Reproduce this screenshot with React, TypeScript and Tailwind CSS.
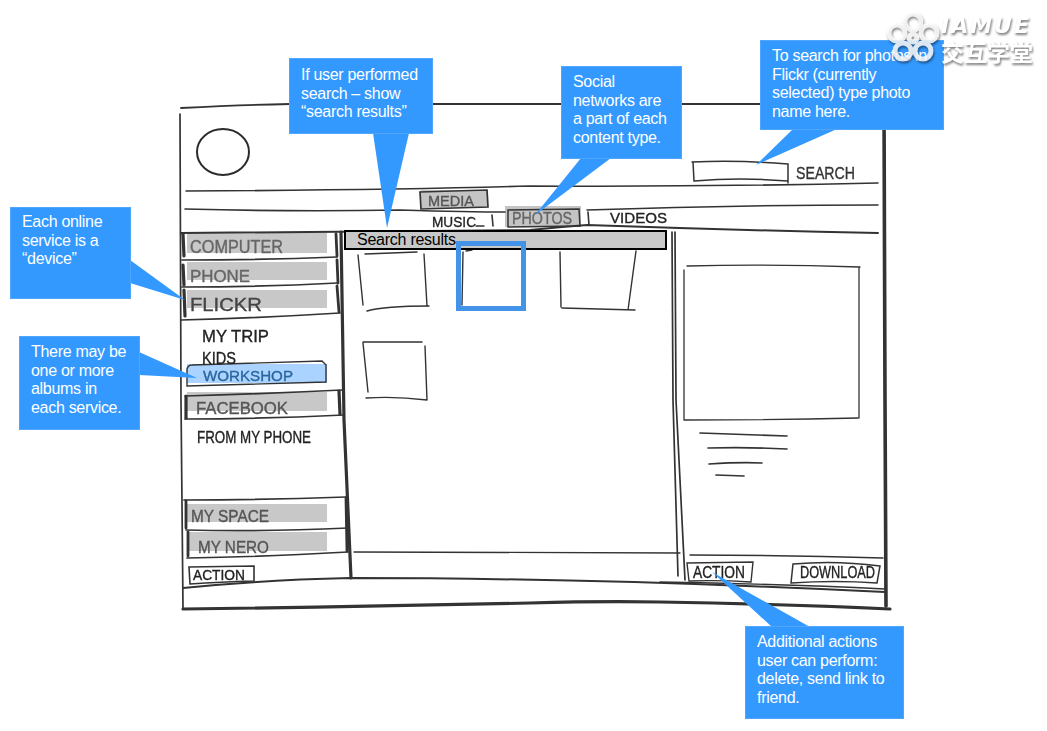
import React from "react";

const strokes: [string, number][] = [
  // outer frame
  ["M181 108 Q240 105 290 104 M433 104 L561 104 M682 104 L760 104", 1.8],
  ["M180 114 L181 400 L183 608", 1.7],
  ["M884 100 L885 400 L886 606", 3.6],
  ["M183 609 Q350 607 530 603 Q600 601 660 602 Q780 604 890 609", 3.2],
  ["M183 588 Q260 580 350 578 Q600 578 885 592", 2],
  ["M660 582 Q780 584 885 589", 1.4],
  // header and nav lines
  ["M186 191 Q400 190 530 186 Q700 187 878 183", 1.6],
  ["M185 209 Q300 212 400 210 Q470 212 505 212 M587 210 Q730 205 878 205", 1.6],
  ["M181 233 Q350 232 530 230 Q560 227 587 225 Q730 230 878 233", 2],
  // sidebar
  ["M341 232 L344 420 L351 578", 3.2],
  ["M183 234 L184 256 M183 265 L184 285 M184 290 L185 316", 3.2],
  ["M336 234 L337 256 M337 260 L338 283 M337 286 L339 312", 2.8],
  ["M182 260 Q260 260 337 257", 1.7],
  ["M182 287 Q260 287 337 283", 1.7],
  ["M181 320 Q260 318 340 313", 1.7],
  ["M185 396 Q260 394 342 390", 1.7],
  ["M185 419 Q260 419 344 415", 1.7],
  ["M186 396 L186 418 M339 391 L340 414", 3.2],
  ["M184 500 Q260 500 346 497", 1.7],
  ["M186 530 Q260 532 348 528", 1.7],
  ["M187 558 Q260 557 348 552", 1.7],
  ["M186 501 L186 528 M188 532 L188 556 M346 498 L347 551", 2.8],
  ["M187 369 Q188 365 192 365 L322 361 L326 365 L326 382 Q260 384 187 386 Z", 1.4],
  ["M189 567 L254 566 L254 581 Q220 582 190 584 Z", 1.6],
  // content area
  ["M354 552 Q520 553 680 553", 1.3],
  ["M690 555 Q790 555 883 558", 1.5],
  ["M672 232 L673 400 L678 576", 1.7],
  ["M675 232 L676 400 L685 580", 1.7],
  // thumbnails
  ["M365 254 L417 252 M358 255 L363 305 M424 254 L427 306 M367 311 Q385 306 429 306", 1.4],
  ["M463 252 L462 305 M466 251 L472 250", 1.4],
  ["M560 252 L561 307 M636 251 L628 310 M562 308 L635 310", 1.4],
  ["M363 342 L422 342 M363 343 L368 392 M425 346 L427 400 M366 398 Q395 396 427 400", 1.4],
  // preview panel
  ["M687 266 Q770 264 860 267 M684 270 L684 420 M859 267 L859 418 M684 420 Q770 420 858 418", 1.3],
  ["M700 433 L787 436", 1.7],
  ["M708 448 Q750 447 787 449", 1.7],
  ["M709 464 Q740 462 762 463", 1.7],
  ["M716 475 L744 476", 1.7],
  // search field
  ["M692 162 Q740 160 788 164 L788 183 M693 162 L694 181 Q740 177 788 181", 1.5],
  // nav separators
  ["M492 215 L493 226 M588 212 L589 225", 1.6],
  ["M476 226 L484 226", 1.3],
  // action buttons
  ["M687 563 L753 562 L751 582 Q720 580 689 581 Z", 1.4],
  ["M793 564 Q835 560 880 566 L877 583 Q835 580 791 583 Z", 1.5],
];

const labels: [string, number, number, number, number, string][] = [
  ["MEDIA", 428, 206, 46, 15, "#555"],
  ["MUSIC", 432, 227, 44, 15, "#222"],
  ["PHOTOS", 512, 224, 60, 16, "#666"],
  ["VIDEOS", 610, 223, 57, 15, "#222"],
  ["SEARCH", 796, 179, 59, 17, "#333"],
  ["COMPUTER", 190, 253, 93, 18, "#666"],
  ["PHONE", 190, 282, 60, 16, "#666"],
  ["FLICKR", 190, 311, 72, 19, "#444"],
  ["MY TRIP", 202, 342, 67, 17, "#222"],
  ["KIDS", 202, 364, 34, 16, "#222"],
  ["WORKSHOP", 203, 381, 90, 15, "#2a659f"],
  ["FACEBOOK", 196, 414, 92, 16, "#555"],
  ["FROM MY PHONE", 197, 443, 114, 16, "#222"],
  ["MY SPACE", 191, 522, 78, 16, "#555"],
  ["MY NERO", 198, 553, 71, 17, "#555"],
  ["ACTION", 193, 580, 52, 14, "#222"],
  ["ACTION", 693, 578, 52, 16, "#222"],
  ["DOWNLOAD", 800, 578, 75, 16, "#222"],
];

const greyBlocks: [number, number, number, number][] = [
  [187, 233, 140, 20],
  [187, 262, 140, 18],
  [187, 290, 140, 18],
  [187, 392, 140, 19],
  [187, 504, 140, 18],
  [187, 532, 140, 19],
];

const Sketch = () => (
  <svg
    className="absolute inset-0 blur-[0.3px] font-['Liberation_Sans',sans-serif]"
    width={1047}
    height={731}
    viewBox="0 0 1047 731"
  >
    {greyBlocks.map(([x, y, w, h]) => (
      <rect key={`${x}-${y}`} x={x} y={y} width={w} height={h} fill="#c8c8c8" />
    ))}
    <rect x={187} y={364} width={140} height={19} fill="#aad4ff" />
    <rect x={420} y={190} width={68} height={18} rx={2} fill="#c4c4c4" />
    <rect x={505} y={206} width={76} height={21} fill="#c4c4c4" />
    <ellipse cx={223} cy={152} rx={26} ry={23} fill="none" stroke="#2b2b2b" strokeWidth={2} />
    <path d="M420 192 L487 190 L488 207 L421 209 Z" fill="none" stroke="#333" strokeWidth={1.7} />
    <path d="M508 210 L579 209 L580 226 L508 227 Z" fill="none" stroke="#333" strokeWidth={1.5} />
    {strokes.map(([d, w], i) => (
      <path key={i} d={d} fill="none" stroke="#333" strokeWidth={w} strokeLinecap="round" />
    ))}
    {labels.map(([text, x, y, len, size, color]) => (
      <text
        key={`${text}-${x}`}
        x={x}
        y={y}
        fontSize={size}
        fill={color}
        stroke={color}
        strokeWidth={0.35}
        textLength={len}
        lengthAdjust="spacingAndGlyphs"
      >
        {text}
      </text>
    ))}
  </svg>
);

const Tails = () => (
  <svg className="absolute inset-0" width={1047} height={731} viewBox="0 0 1047 731">
    <g fill="#3399ff">
      <polygon points="373,133 409,133 387,228" />
      <polygon points="581,158 611,158 535,215" />
      <polygon points="793,129 837,129 756,165" />
      <polygon points="130,260 130,283 185,300" />
      <polygon points="139,352 139,375 197,378" />
      <polygon points="772,627 810,627 712,572" />
    </g>
  </svg>
);

const Callout = ({ className, lines }: { className: string; lines: string[] }) => (
  <div
    className={`absolute bg-[#3399ff] border border-[#4fa6fc] pl-[11px] text-white text-[16px] leading-[18.67px] tracking-[-0.3px] font-['Liberation_Sans',sans-serif] ${className}`}
  >
    {lines.map((line) => (
      <div key={line} className="whitespace-nowrap">
        {line}
      </div>
    ))}
  </div>
);

const Logo = () => (
  <div className="absolute left-[886px] top-[11px] flex [filter:drop-shadow(1px_2px_1px_rgba(0,0,0,0.5))]">
    <svg width={55} height={56} viewBox="0 0 55 56" className="opacity-85">
      <g fill="none" stroke="#fff" strokeWidth={5}>
        <circle cx={27} cy={11} r={8} />
        <circle cx={11} cy={22} r={8} />
        <circle cx={43} cy={22} r={8} />
        <circle cx={17} cy={40} r={8} />
        <circle cx={37} cy={40} r={8} />
        <circle cx={27} cy={27} r={4} />
      </g>
    </svg>
    <div className="flex flex-col gap-[2px] text-white font-bold">
      <span className="pt-[4px] text-[22px] leading-[22px] italic tracking-[2px] font-['DejaVu_Sans',sans-serif]">
        IAMUE
      </span>
      <span className="text-[23px] leading-[24px] font-['Noto_Sans_CJK_SC',sans-serif]">交互学堂</span>
    </div>
  </div>
);

export default function App() {
  return (
    <div className="relative w-[1047px] h-[731px] bg-white overflow-hidden">
      <Sketch />

      {/* search results bar and the selected thumbnail */}
      <div className="absolute left-[344px] top-[230px] w-[323px] h-[20px] bg-[#c8c8c8] border-2 border-black pl-[11px] text-[16px] leading-[16px] tracking-[-0.25px] text-black font-['Liberation_Sans',sans-serif]">
        Search results
      </div>
      <div className="absolute left-[456px] top-[241px] w-[70px] h-[70px] border-[5px] border-[#4394e8]" />

      <Tails />
      <Callout
        className="left-[289px] top-[58px] w-[144px] h-[76px] pt-[7px] pl-[10px]"
        lines={["If user performed", "search – show", "“search results”"]}
      />
      <Callout
        className="left-[561px] top-[66px] w-[121px] h-[93px] pt-[6px]"
        lines={["Social", "networks are", "a part of each", "content type."]}
      />
      <Callout
        className="left-[760px] top-[40px] w-[184px] h-[90px] pt-[6px]"
        lines={["To search for photos in", "Flickr (currently", "selected) type photo", "name here."]}
      />
      <Callout
        className="left-[10px] top-[207px] w-[121px] h-[92px] pt-[5px]"
        lines={["Each online", "service is a", "“device”"]}
      />
      <Callout
        className="left-[19px] top-[336px] w-[121px] h-[94px] pt-[6px]"
        lines={["There may be", "one or more", "albums in", "each service."]}
      />
      <Callout
        className="left-[745px] top-[626px] w-[159px] h-[93px] pt-[6px]"
        lines={["Additional actions", "user can perform:", "delete, send link to", "friend."]}
      />
      <Logo />
    </div>
  );
}
